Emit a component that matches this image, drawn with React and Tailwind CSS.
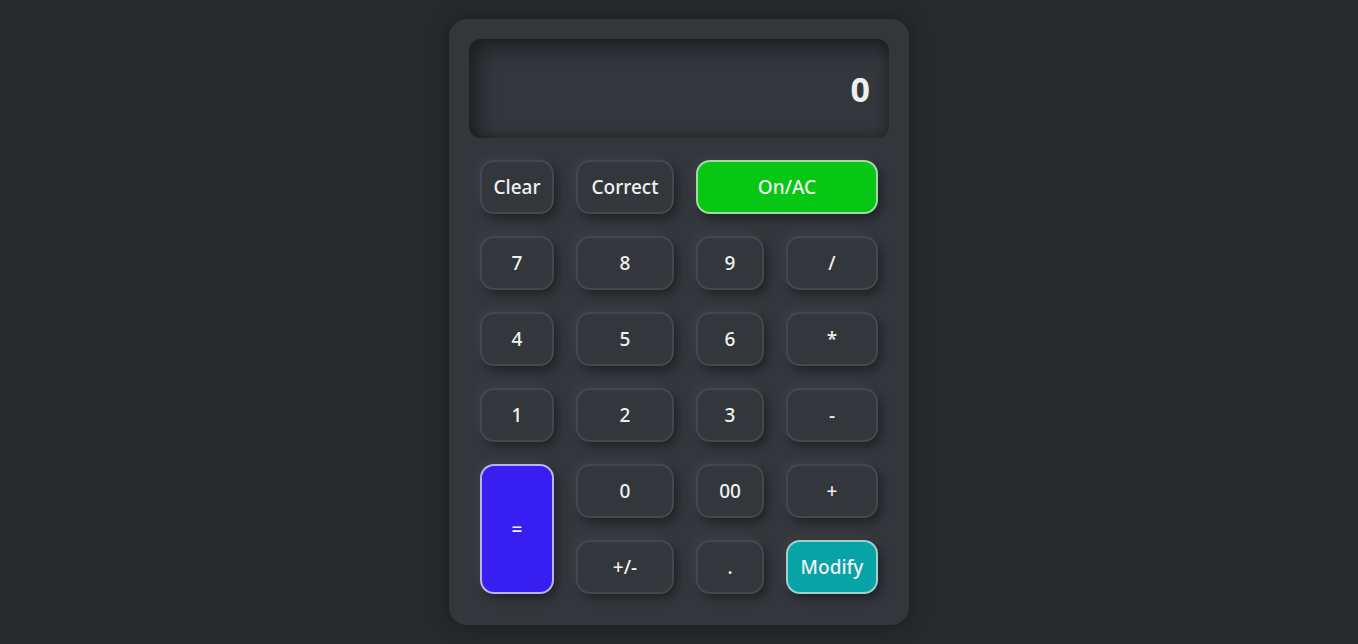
import React from "react";

const base =
  "flex items-center justify-center rounded-[14px] border-2 text-[19px] font-medium text-[#f1f1f1] shadow-[-4px_-4px_8px_rgba(255,255,255,0.04),4px_5px_8px_rgba(0,0,0,0.35)]";
const dark = base + " bg-[#33373c] border-[#44484c]";

function B({ children, className = "" }) {
  return <div className={dark + " " + className}>{children}</div>;
}

export default function App() {
  return (
    <div
      className="w-full h-[644px] bg-[#272a2d] flex justify-center pt-[19px]"
      style={{ fontFamily: '"Comic Sans MS", "Noto Sans", sans-serif' }}
    >
      <div className="w-[460px] h-[606px] rounded-[18px] bg-[#33373c] p-[20px] shadow-[0_0_20px_rgba(0,0,0,0.35)] flex flex-col">
        <div className="h-[99px] rounded-[12px] bg-[#33373c] shadow-[inset_10px_10px_18px_rgba(0,0,0,0.4),inset_-4px_-4px_10px_rgba(0,0,0,0.2)] flex items-center justify-end pr-[19px] pt-[2px]">
          <span
            className="text-[34px] font-bold text-[#eeeeee]"
            style={{ fontFamily: '"Open Sans", "Noto Sans", sans-serif' }}
          >
            0
          </span>
        </div>
        <div className="mt-[22px] px-[11px] grid grid-cols-[74px_98px_68px_92px] grid-rows-[54px_54px_54px_54px_54px_54px] gap-[22px]">
          <B>Clear</B>
          <B>Correct</B>
          <div className={base + " col-span-2 bg-[#07c614] border-[#a3d9a3]"}>On/AC</div>
          <B>7</B>
          <B>8</B>
          <B>9</B>
          <B>/</B>
          <B>4</B>
          <B>5</B>
          <B>6</B>
          <B>*</B>
          <B>1</B>
          <B>2</B>
          <B>3</B>
          <B>-</B>
          <div className={base + " row-span-2 bg-[#361ff0] border-[#bcb3ee]"}>=</div>
          <B>0</B>
          <B>00</B>
          <B>+</B>
          <B>+/-</B>
          <B>.</B>
          <div className={base + " bg-[#08a3a6] border-[#a2cfcf]"}>Modify</div>
        </div>
      </div>
    </div>
  );
}
